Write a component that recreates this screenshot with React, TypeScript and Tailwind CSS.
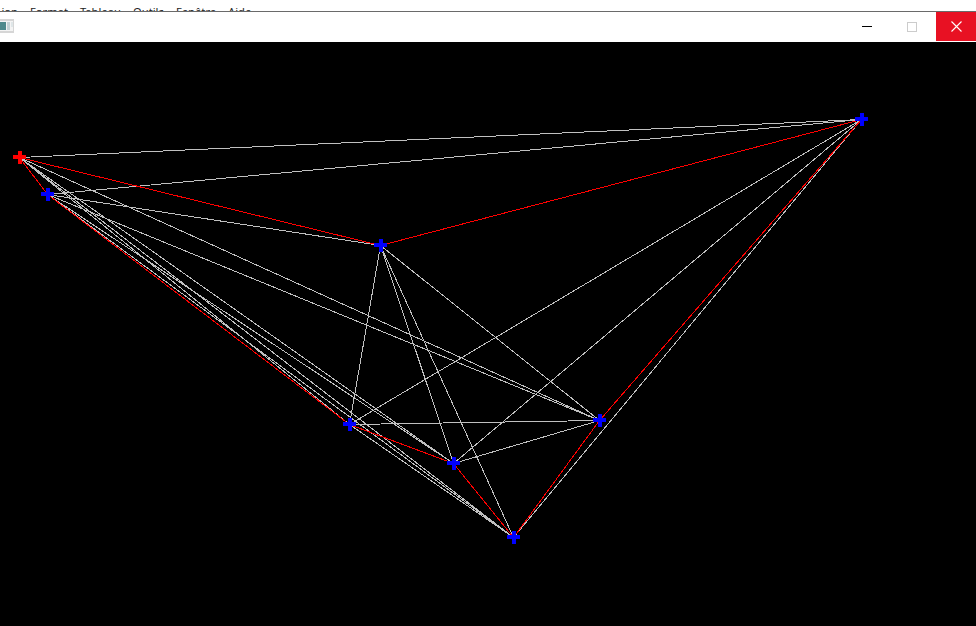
const P = {
  A: [19, 157], B: [47, 194], C: [380, 245], D: [861, 119],
  E: [349, 424], F: [453, 463], G: [513, 537], H: [599, 420],
} as const;
type K = keyof typeof P;
const white: [K, K][] = [
  ["A","D"],["B","D"],["B","C"],["A","H"],["B","H"],["A","F"],["B","F"],["A","G"],["B","G"],["A","E"],
  ["C","E"],["C","F"],["C","G"],["C","H"],["D","E"],["D","F"],["D","G"],["E","H"],["F","H"],["E","G"],
];
const red: [K, K][] = [["A","C"],["C","D"],["D","H"],["H","G"],["G","F"],["F","E"],["E","B"],["B","A"]];

function Cross({ k, color }: { k: K; color: string }) {
  const [x, y] = P[k];
  return (
    <g fill={color}>
      <rect x={x - 6} y={y - 2} width={13} height={4} />
      <rect x={x - 1} y={y - 6} width={4} height={13} />
    </g>
  );
}

export default function App() {
  const seg = (e: [K, K], c: string) => (
    <line key={e.join("")} x1={P[e[0]][0] + 0.5} y1={P[e[0]][1] + 0.5} x2={P[e[1]][0] + 0.5} y2={P[e[1]][1] + 0.5} stroke={c} strokeWidth={1} />
  );
  return (
    <div className="w-[976px] h-[626px] flex flex-col bg-black overflow-hidden font-['Noto_Sans',sans-serif]">
      <div className="h-[11px] bg-white overflow-hidden flex text-[11.2px] leading-[16px] text-[#222] pt-[4px] ml-[-1px] w-[977px]">
        <span className="w-[31px] text-right pr-[12px]">ion</span>
        <span className="w-[50px]">Format</span>
        <span className="w-[53px]">Tableau</span>
        <span className="w-[43px]">Outils</span>
        <span className="w-[52px]">Fenêtre</span>
        <span>Aide</span>
      </div>
      <div className="h-px bg-[#6a6a6a]" />
      <div className="h-[30px] bg-white flex items-start">
        <svg width="14" height="14" viewBox="0 0 14 14" className="mt-[7px]" aria-hidden="true">
          <rect x="0" y="0" width="14" height="14" fill="#d6d6d6" />
          <rect x="0" y="2" width="13" height="10" fill="#f4f4f4" />
          <rect x="0" y="3" width="6" height="8" fill="#4f8a8c" />
          <rect x="7" y="3" width="3" height="8" fill="#c4d2d4" />
          <rect x="11" y="3" width="2" height="5" fill="#dfe6e8" />
        </svg>
        <div className="flex-1" />
        <div className="w-[46px] h-[29px] flex items-center justify-center">
          <div className="w-[10px] h-px bg-black" />
        </div>
        <div className="w-[44px] h-[29px] flex items-center justify-center mr-[2px]">
          <div className="w-[10px] h-[10px] border border-[#cccccc]" />
        </div>
        <div className="w-[40px] h-[29px] bg-[#e81123] flex items-center justify-center">
          <svg width="11" height="11" viewBox="0 0 11 11" aria-hidden="true">
            <path d="M0.5 0.5L10.5 10.5M10.5 0.5L0.5 10.5" stroke="#fff" strokeWidth="1.1" fill="none" />
          </svg>
        </div>
      </div>
      <div className="flex-1 min-h-0">
        <svg width="976" height="584" viewBox="0 42 976 584" shapeRendering="crispEdges" className="block" aria-hidden="true">
          {white.map((e) => seg(e, "#c0c0c0"))}
          {red.map((e) => seg(e, "#ff0000"))}
          <Cross k="B" color="#0000ff" />
          <Cross k="C" color="#0000ff" />
          <Cross k="D" color="#0000ff" />
          <Cross k="E" color="#0000ff" />
          <Cross k="F" color="#0000ff" />
          <Cross k="G" color="#0000ff" />
          <Cross k="H" color="#0000ff" />
          <Cross k="A" color="#ff0000" />
        </svg>
      </div>
    </div>
  );
}
